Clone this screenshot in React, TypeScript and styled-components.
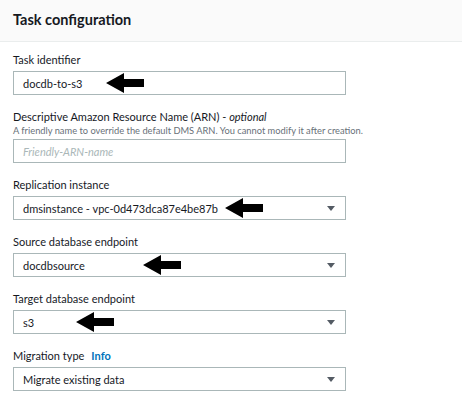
import React from 'react'
import styled, { createGlobalStyle } from 'styled-components'

const GlobalStyle = createGlobalStyle`
  html, body {
    margin: 0;
    padding: 0;
    background: #ffffff;
  }
  body {
    font-family: Lato, 'Liberation Sans', sans-serif;
    color: #16191f;
  }
`

const Panel = styled.div`
  width: 462px;
  height: 418px;
  background: #ffffff;
  overflow: hidden;
`

const Header = styled.div`
  height: 42px;
  box-sizing: border-box;
  background: #fafafa;
  border-bottom: 1px solid #eaeded;
  display: flex;
  align-items: center;
  padding: 0 13px 2px;
`

const Title = styled.h2`
  margin: 0;
  font-size: 14.5px;
  font-weight: 700;
  color: #16191f;
`

const Form = styled.div`
  display: flex;
  flex-direction: column;
  gap: 14px;
  padding: 10px 13px 0;
  width: 333px;
`

const Field = styled.div`
  display: flex;
  flex-direction: column;
  position: relative;
`

const Label = styled.div`
  font-size: 11px;
  line-height: 16px;
  color: #16191f;
  margin-bottom: 3px;
  display: flex;
  gap: 7px;
`

const Optional = styled.i`
  font-style: italic;
`

const InfoLink = styled.span`
  color: #0073bb;
  font-weight: 700;
`

const Hint = styled.div`
  font-size: 9.3px;
  line-height: 12px;
  color: #687078;
  margin: -3px 0 2px;
  white-space: nowrap;
`

const Box = styled.div<{ $placeholder?: boolean }>`
  height: 24px;
  box-sizing: border-box;
  border: 1px solid #aab7b8;
  background: #ffffff;
  display: flex;
  align-items: center;
  justify-content: space-between;
  padding: 0 10px 0 9px;
  font-size: 11px;
  color: ${({ $placeholder }) => ($placeholder ? '#aab7b8' : '#16191f')};
  font-style: ${({ $placeholder }) => ($placeholder ? 'italic' : 'normal')};
`

const Caret = styled.span`
  width: 0;
  height: 0;
  border-left: 4px solid transparent;
  border-right: 4px solid transparent;
  border-top: 5px solid #545b64;
`

const Pointer = styled.svg<{ $left: number }>`
  position: absolute;
  left: ${({ $left }) => $left}px;
  bottom: 2px;
`

const Arrow = ({ left }: { left: number }) => (
  <Pointer $left={left} width="38" height="20" viewBox="0 0 38 20">
    <path d="M0 10 L18 0 L18 6 L38 6 L38 14 L18 14 L18 20 Z" fill="#000" />
  </Pointer>
)

export default function App() {
  return (
    <>
      <GlobalStyle />
      <Panel>
        <Header>
          <Title>Task configuration</Title>
        </Header>
        <Form>
          <Field>
            <Label>Task identifier</Label>
            <Box>docdb-to-s3</Box>
            <Arrow left={93} />
          </Field>
          <Field>
            <Label>
              <span>
                Descriptive Amazon Resource Name (ARN) - <Optional>optional</Optional>
              </span>
            </Label>
            <Hint>A friendly name to override the default DMS ARN. You cannot modify it after creation.</Hint>
            <Box $placeholder>Friendly-ARN-name</Box>
          </Field>
          <Field>
            <Label>Replication instance</Label>
            <Box>
              dmsinstance - vpc-0d473dca87e4be87b
              <Caret />
            </Box>
            <Arrow left={212} />
          </Field>
          <Field>
            <Label>Source database endpoint</Label>
            <Box>
              docdbsource
              <Caret />
            </Box>
            <Arrow left={130} />
          </Field>
          <Field>
            <Label>Target database endpoint</Label>
            <Box>
              s3
              <Caret />
            </Box>
            <Arrow left={63} />
          </Field>
          <Field>
            <Label>
              Migration type <InfoLink>Info</InfoLink>
            </Label>
            <Box>
              Migrate existing data
              <Caret />
            </Box>
          </Field>
        </Form>
      </Panel>
    </>
  )
}
